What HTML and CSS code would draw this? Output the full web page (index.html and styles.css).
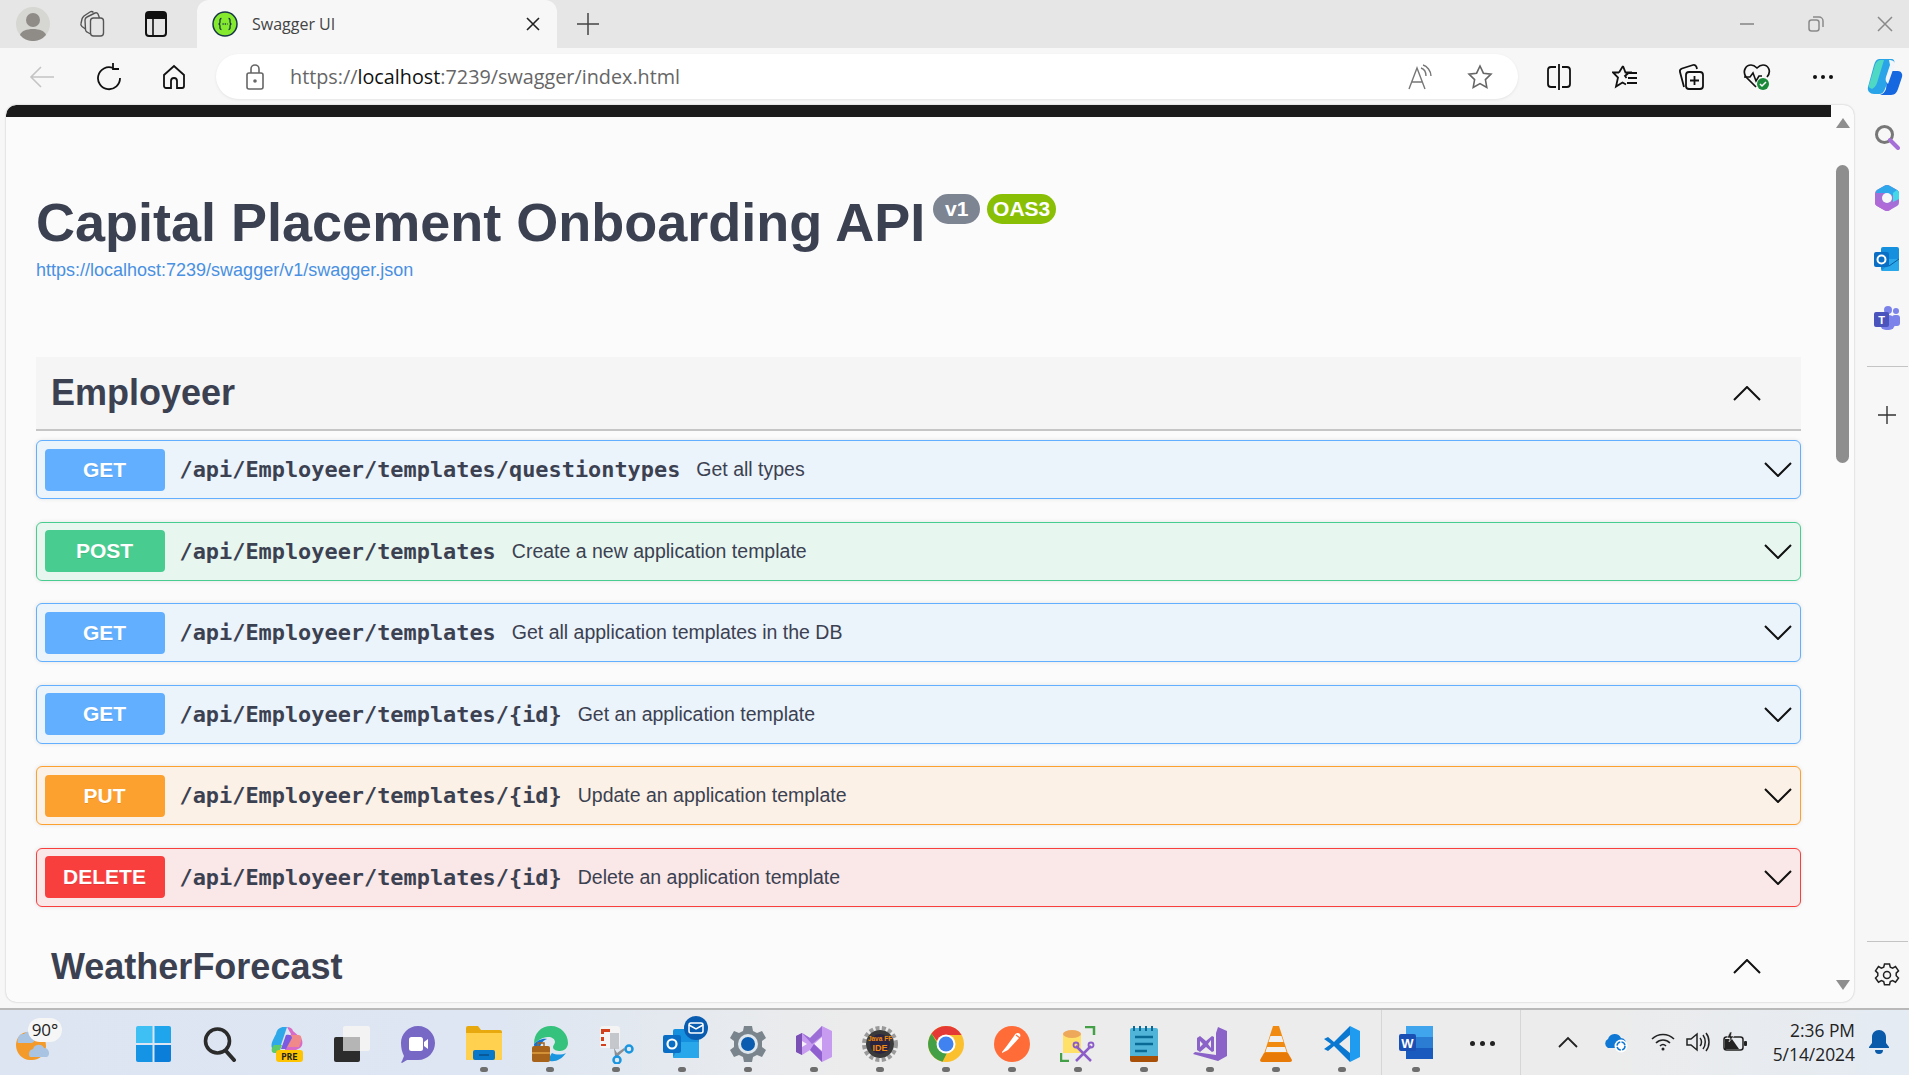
FILE: index.html
```html
<!DOCTYPE html>
<html lang="en">
<head>
  <meta charset="UTF-8">
  <title>Swagger UI</title>
  <link rel="stylesheet" href="styles.css">
</head>
<body>
<div class="window">

  <!-- title bar -->
  <div class="titlebar">
    <div class="slot s-profile">
      <svg width="34" height="34" viewBox="0 0 34 34"><circle cx="17" cy="17" r="17" fill="#d6d6d2"/><circle cx="17" cy="13" r="7" fill="#8f8b87"/><path d="M4 28c2-8 24-8 26 0a17 17 0 0 1-26 0z" fill="#8f8b87"/></svg>
    </div>
    <div class="slot s-coll">
      <svg width="26" height="28" viewBox="0 0 26 28" fill="none" stroke="#555" stroke-width="1.400"><rect x="11.500" y="8" width="13" height="18" rx="3"/><path d="M11.500 24 8 22c-1-.5-1.500-1.500-1.500-2.500L6 10c0-1.500.8-2.500 2-3l8-4c1.500-.5 2.500 0 3 1l1.500 4"/><path d="M6.500 19 3 16.500C2 15.500 1.500 14.500 2 13.500L3 9c.4-1.500 1-2 2-3l6-4c1.500-.8 2.500-.5 3.500.5"/></svg>
    </div>
    <div class="slot s-tabs">
      <svg width="22" height="26" viewBox="0 0 22 26"><rect x="1" y="1" width="20" height="24" rx="3" fill="none" stroke="#111" stroke-width="2"/><path d="M1 4a3 3 0 0 1 3-3h14a3 3 0 0 1 3 3v4H1z" fill="#111"/><path d="M8 8v16" stroke="#111" stroke-width="1.600"/></svg>
    </div>
    <div class="tab">
      <svg width="26" height="26" viewBox="0 0 26 26"><circle cx="13" cy="13" r="12" fill="#85ea2d" stroke="#173646" stroke-width="1.500"/><path d="M9.500 7.500c-2 0-1.500 2-1.500 3.500 0 1.500-1 2-1.500 2 .5 0 1.500.5 1.500 2s-.5 3.500 1.500 3.500M16.500 7.500c2 0 1.500 2 1.500 3.500 0 1.500 1 2 1.500 2-.5 0-1.500.5-1.500 2s.5 3.500-1.500 3.500" fill="none" stroke="#173646" stroke-width="1.300"/><path d="M10.500 13h5" stroke="#173646" stroke-width="1.500" stroke-dasharray="1.200 1"/></svg>
      <span class="tab-title">Swagger UI</span>
      <svg class="tab-close" width="14" height="14" viewBox="0 0 14 14"><path d="M1 1l12 12M13 1 1 13" stroke="#222" stroke-width="1.600"/></svg>
    </div>
    <div class="slot s-new">
      <svg width="22" height="22" viewBox="0 0 22 22"><path d="M11 0v22M0 11h22" stroke="#444" stroke-width="1.500"/></svg>
    </div>
    <div class="win-controls">
      <svg width="16" height="16" viewBox="0 0 16 16"><path d="M1 8h14" stroke="#8a8a8a" stroke-width="1.600"/></svg>
      <svg width="16" height="16" viewBox="0 0 16 16" fill="none" stroke="#8a8a8a" stroke-width="1.500"><rect x="1" y="4" width="10" height="11" rx="2.500"/><path d="M5 1h6a4 4 0 0 1 4 4v6"/></svg>
      <svg width="16" height="16" viewBox="0 0 16 16"><path d="M1 1l14 14M15 1 1 15" stroke="#8a8a8a" stroke-width="1.500"/></svg>
    </div>
  </div>

  <!-- address bar row -->
  <div class="toolbar">
    <div class="tool">
      <svg width="26" height="24" viewBox="0 0 26 24" fill="none" stroke="#c4c4c4" stroke-width="1.600"><path d="M25 12H2M12 2 2 12l10 10"/></svg>
    </div>
    <div class="tool">
      <svg width="26" height="28" viewBox="0 0 26 28" fill="none" stroke="#111" stroke-width="1.800"><path d="M18 5a11 11 0 1 0 7 10"/><path d="M18 0v6h6"/></svg>
    </div>
    <div class="tool">
      <svg width="24" height="26" viewBox="0 0 24 26" fill="none" stroke="#111" stroke-width="1.800"><path d="M9 24H4a2 2 0 0 1-2-2V11l10-9 10 9v11a2 2 0 0 1-2 2h-5v-7a3 3 0 0 0-6 0z"/></svg>
    </div>
    <div class="address">
      <svg width="18" height="26" viewBox="0 0 18 26" fill="none" stroke="#666" stroke-width="1.600"><rect x="1" y="9" width="16" height="16" rx="2"/><path d="M5 9V5a4 4 0 0 1 8 0v4"/><circle cx="9" cy="17" r="1" fill="#666"/></svg>
      <span class="url">https://<b>localhost</b>:7239/swagger/index.html</span>
      <svg class="read-aloud" width="26" height="26" viewBox="0 0 26 26" fill="none" stroke="#777" stroke-width="1.400"><path d="M1 25 9 4l8 21M4 18h10"/><path d="M15 3c3 1 5 4 5 8M17 0c4 1 8 6 8 11" transform="translate(-2 1)"/></svg>
      <svg class="fav" width="26" height="26" viewBox="0 0 26 26" fill="none" stroke="#666" stroke-width="1.600"><path d="m13 2 3.400 7.200 7.600 1-5.600 5.400 1.400 7.800-6.800-3.800-6.800 3.800 1.400-7.800L2 10.200l7.600-1z"/></svg>
    </div>
    <div class="tools-right">
      <div class="tool-r">
        <svg width="24" height="28" viewBox="0 0 24 28" fill="none" stroke="#111" stroke-width="1.800"><path d="M12 1v26"/><path d="M9 4H4a3 3 0 0 0-3 3v14a3 3 0 0 0 3 3h5M15 4h5a3 3 0 0 1 3 3v14a3 3 0 0 1-3 3h-5"/></svg>
      </div>
      <div class="tool-r">
        <svg width="26" height="28" viewBox="0 0 26 28" fill="none" stroke="#111" stroke-width="1.800"><path d="m11 3 2.500 6.500H20M17 9.500l-4 3.500 1.500 2M7 9.500 11 3M7 9.500H1l5 5-2 9 6.500-4 3.500 2"/><path d="M17 10h8M16 15h9M15 20h10"/></svg>
      </div>
      <div class="tool-r">
        <svg width="26" height="28" viewBox="0 0 26 28" fill="none" stroke="#111" stroke-width="1.800"><rect x="8" y="9" width="17" height="17" rx="3"/><path d="M16.500 13v9M12 17.500h9"/><path d="M6 24 2 9c-.5-2 .5-3 2-3.500L15 2c2-.5 3 .5 3.500 2l.5 2"/></svg>
      </div>
      <div class="tool-r">
        <svg width="28" height="28" viewBox="0 0 28 28"><path d="M13 24 3 14C-1 8 3 2 8 2c3 0 5 2 6 3 1-1 3-3 6-3 5 0 9 6 4 12" fill="none" stroke="#111" stroke-width="1.700"/><path d="M1 14h6l3-4 3 8 3-5h3" fill="none" stroke="#111" stroke-width="1.600"/><circle cx="20" cy="21" r="6" fill="#1a8a3a"/><path d="m17 21 2 2 4-4" fill="none" stroke="#fff" stroke-width="1.500"/></svg>
      </div>
      <div class="tool-r dots"><i></i><i></i><i></i></div>
      <div class="tool-r copilot">
        <svg width="36" height="38" viewBox="0 0 36 38"><path d="M12 1h12c3 0 4 2 3 5l-9 25c-1 3-3 5-6 5H7c-4 0-7-3-6-7L7 7c1-4 3-6 5-6z" fill="#2aa4e8"/><path d="M2 27 8 7c1-3 3-5 6-5h3L10 25c-1 3-3 5-5 6-2-1-4-2-3-4z" fill="#4fd8c4"/><path d="M21 13h10c3 0 5 3 4 6l-4 12c-1 3-3 6-7 6H13c3-1 5-3 6-6z" fill="#1668e0"/><path d="M22 2c3 0 6 1 6 4l-7 20c-2-2-3-4-2-7l4-12z" fill="#f2f6fa"/></svg>
      </div>
    </div>
  </div>

  <div class="middle">
    <div class="viewport">
      <div class="page">
        <div class="topbar"></div>

        <div class="info">
          <div class="title-row">
            <h2 class="title">Capital Placement Onboarding API</h2>
            <span class="badge badge-ver">v1</span>
            <span class="badge badge-oas">OAS3</span>
          </div>
          <a class="spec-link" href="#">https://localhost:7239/swagger/v1/swagger.json</a>
        </div>

        <div class="tag tag-open">
          <h3>Employeer</h3>
          <svg class="chev-tag" width="28" height="15" viewBox="0 0 28 15"><path d="M1 14 14 1l13 13" fill="none" stroke="#111" stroke-width="2"/></svg>
        </div>

        <div class="ops">
          <div class="op op-get">
            <span class="method">GET</span>
            <span class="path">/api/Employeer/templates/questiontypes</span>
            <span class="desc">Get all types</span>
            <svg class="chev" width="28" height="15" viewBox="0 0 28 15"><path d="m1 1 13 13L27 1" fill="none" stroke="#111" stroke-width="2"/></svg>
          </div>
          <div class="op op-post">
            <span class="method">POST</span>
            <span class="path">/api/Employeer/templates</span>
            <span class="desc">Create a new application template</span>
            <svg class="chev" width="28" height="15" viewBox="0 0 28 15"><path d="m1 1 13 13L27 1" fill="none" stroke="#111" stroke-width="2"/></svg>
          </div>
          <div class="op op-get">
            <span class="method">GET</span>
            <span class="path">/api/Employeer/templates</span>
            <span class="desc">Get all application templates in the DB</span>
            <svg class="chev" width="28" height="15" viewBox="0 0 28 15"><path d="m1 1 13 13L27 1" fill="none" stroke="#111" stroke-width="2"/></svg>
          </div>
          <div class="op op-get">
            <span class="method">GET</span>
            <span class="path">/api/Employeer/templates/{id}</span>
            <span class="desc">Get an application template</span>
            <svg class="chev" width="28" height="15" viewBox="0 0 28 15"><path d="m1 1 13 13L27 1" fill="none" stroke="#111" stroke-width="2"/></svg>
          </div>
          <div class="op op-put">
            <span class="method">PUT</span>
            <span class="path">/api/Employeer/templates/{id}</span>
            <span class="desc">Update an application template</span>
            <svg class="chev" width="28" height="15" viewBox="0 0 28 15"><path d="m1 1 13 13L27 1" fill="none" stroke="#111" stroke-width="2"/></svg>
          </div>
          <div class="op op-delete">
            <span class="method">DELETE</span>
            <span class="path">/api/Employeer/templates/{id}</span>
            <span class="desc">Delete an application template</span>
            <svg class="chev" width="28" height="15" viewBox="0 0 28 15"><path d="m1 1 13 13L27 1" fill="none" stroke="#111" stroke-width="2"/></svg>
          </div>
        </div>

        <div class="tag tag-next">
          <h3>WeatherForecast</h3>
          <svg class="chev-tag" width="28" height="15" viewBox="0 0 28 15"><path d="M1 14 14 1l13 13" fill="none" stroke="#111" stroke-width="2"/></svg>
        </div>
      </div>

      <div class="scrollbar">
        <span class="arrow arrow-up"></span>
        <span class="thumb"></span>
        <span class="arrow arrow-down"></span>
      </div>
    </div>

    <!-- edge sidebar -->
    <div class="sidebar">
      <svg width="26" height="26" viewBox="0 0 26 26"><circle cx="10.500" cy="10.500" r="8" fill="none" stroke="#777" stroke-width="3"/><path d="m16 16 8 8" stroke="#a56fd8" stroke-width="4" stroke-linecap="round"/></svg>
      <svg width="26" height="28" viewBox="0 0 26 28"><path d="M10 2c2-1.300 4-1.300 6 0l7 4c1.500 1 2 2 2 4v8c0 2-.5 3-2 4l-7 4c-2 1.300-4 1.300-6 0l-7-4c-1.500-1-2-2-2-4v-8c0-2 .5-3 2-4z" fill="#a56fd8"/><path d="M13 1c1 0 2 .4 3 1l7 4c1.500 1 2 2 2 4v5l-7-4-5-2H2c0-1 .5-2 1-3l7-4c1-.6 2-1 3-1z" fill="#2ea8ea"/><path d="M25 10v5l-6 3V9l4-3c1.500 1 2 2 2 4z" fill="#45d8ea"/><path d="M1 14l10 6 9 2-4 4c-2 1.300-4 1.300-6 0l-7-4c-1.500-1-2-2-2-4z" fill="#b06ad8"/><circle cx="13" cy="14" r="5" fill="#f7f7f7"/></svg>
      <svg width="26" height="26" viewBox="0 0 26 26"><rect x="7" y="1" width="18" height="24" rx="2" fill="#1490df"/><path d="M12 13h13v11a1 1 0 0 1-1 1H7l5-4z" fill="#28a8ea"/><path d="M25 13 15 20l-3-2" fill="none" stroke="#0a5a9e" stroke-width="1"/><rect x="0" y="6" width="15" height="15" rx="2" fill="#0a6fc4"/><circle cx="7.500" cy="13.500" r="4" fill="none" stroke="#fff" stroke-width="2"/></svg>
      <svg width="26" height="26" viewBox="0 0 26 26"><circle cx="22" cy="5" r="3" fill="#7b83eb"/><rect x="18" y="9" width="8" height="11" rx="3" fill="#7b83eb"/><circle cx="14" cy="4" r="4" fill="#7b83eb"/><rect x="6" y="9" width="15" height="15" rx="6" fill="#7b83eb"/><rect x="0" y="6" width="15" height="15" rx="2" fill="#4b53bc"/><text x="7.500" y="18" class="teams-t">T</text></svg>
      <div class="side-rule"></div>
      <svg class="side-plus" width="18" height="18" viewBox="0 0 18 18"><path d="M9 0v18M0 9h18" stroke="#333" stroke-width="1.400"/></svg>
      <div class="side-space"></div>
      <div class="side-rule side-rule-low"></div>
      <svg class="side-gear" width="26" height="26" viewBox="0 0 26 26" fill="none" stroke="#222" stroke-width="1.500"><path d="M10.500 2h5l.8 3.200 2.300 1 2.900-1.600 3 4.200-2.300 2.300v2.600l2.300 2.300-3 4.200-2.900-1.600-2.300 1-.8 3.200h-5l-.8-3.200-2.300-1-2.900 1.600-3-4.200 2.300-2.300v-2.600L1.500 8.800l3-4.200 2.900 1.600 2.300-1z"/><circle cx="13" cy="13" r="3.500"/></svg>
    </div>
  </div>

  <!-- windows taskbar -->
  <div class="taskbar">
    <div class="weather">
      <svg width="38" height="38" viewBox="0 0 38 38"><path d="M14 7h4a14 14 0 0 1 0 28h-2C8 35 2 28 2 20 2 13 7 7 14 7z" fill="#f39a2b"/><path d="M4 14a5 5 0 0 1 6-5 5 5 0 0 1 9 2 4 4 0 0 1-1 7H4a4 4 0 0 1 0-4z" fill="#a9c3e2"/><path d="M16 32a5 5 0 0 1 3-8 6 6 0 0 1 11-1 5 5 0 0 1 3 9z" fill="#a9c3e2"/></svg>
      <span class="temp">90°</span>
    </div>

    <div class="task t-start">
      <svg width="35" height="36" viewBox="0 0 35 36"><path d="M2 0h14.500v17H0V2a2 2 0 0 1 2-2z" fill="#3fc0f5"/><path d="M18.500 0H33a2 2 0 0 1 2 2v15H18.500z" fill="#1ea5ec"/><path d="M0 19h16.500v17H2a2 2 0 0 1-2-2z" fill="#1593e4"/><path d="M18.500 19H35v15a2 2 0 0 1-2 2H18.500z" fill="#0a7ed8"/></svg>
    </div>
    <div class="task">
      <svg width="34" height="36" viewBox="0 0 34 36" fill="none" stroke="#2b2b2b"><circle cx="14.500" cy="15" r="12" stroke-width="3.600"/><path d="m23 25 8 9" stroke-width="4" stroke-linecap="round"/></svg>
    </div>
    <div class="task">
      <svg width="36" height="36" viewBox="0 0 36 36"><path d="M8 8c1-5 4-7 8-7h3L12 22H4C2 18 6 12 8 8z" fill="#2ea8e8"/><path d="M4 22c-1 3 0 5 3 5h4l3-8H6z" fill="#5ecb6a"/><path d="M19 1c3 0 5 1 6 4l8 7c2 3 2 8-1 10l-8 4h-8L23 8z" fill="#d86ac8"/><path d="M18 9h12c3 0 4 2 3 6l-2 6H15z" fill="#f08a8a"/><path d="M18 9c3-1 6 0 6 3l-6 11h-5z" fill="#7a5ae0"/><rect x="8" y="24" width="27" height="12" rx="3" fill="#ffc400"/><text x="21.500" y="34" class="pre-t">PRE</text></svg>
    </div>
    <div class="task">
      <svg width="36" height="36" viewBox="0 0 36 36"><rect x="0" y="11" width="26" height="25" rx="2" fill="#2c2c2c"/><rect x="9" y="0" width="27" height="25" rx="2" fill="#f3f3f3"/><rect x="9" y="11" width="17" height="14" fill="#b5b5b5"/></svg>
    </div>
    <div class="task">
      <svg width="36" height="38" viewBox="0 0 36 38"><path d="M18 0c10 0 17 8 17 17s-7 17-17 17H7l-5 3c-1 0-1-1 0-2l2-5C2 26 1 22 1 17 1 8 8 0 18 0z" fill="#7668c4"/><rect x="9" y="11" width="14" height="14" rx="2.500" fill="#fff"/><path d="m24 16 4-3v10l-4-3z" fill="#fff"/></svg>
    </div>
    <div class="task has-dot">
      <svg width="36" height="34" viewBox="0 0 36 34"><path d="M0 2a2 2 0 0 1 2-2h10l3 4h19a2 2 0 0 1 2 2v26a2 2 0 0 1-2 2H2a2 2 0 0 1-2-2z" fill="#e8a90f"/><path d="M0 7h36v25a2 2 0 0 1-2 2H2a2 2 0 0 1-2-2z" fill="#ffd14f"/><rect x="7" y="24" width="22" height="10" rx="2" fill="#0a78c8"/><path d="M13 29h10" stroke="#0a4f8a" stroke-width="1.500"/></svg>
    </div>
    <div class="task has-dot">
      <svg width="36" height="36" viewBox="0 0 36 36"><path d="M2 18C2 7 9 0 19 0c10 0 17 8 17 17 0 5-4 8-8 8-3 0-7-1-7-4 0-2 2-3 2-5 0-3-3-5-7-5-6 0-11 4-14 7z" fill="#35c27c"/><path d="M2 18c3-3 8-6 13-5-5 2-7 6-7 10 0 6 5 11 11 12-9 1-17-7-17-17z" fill="#1173d4"/><path d="M18 35c6 1 12-2 16-8-4 2-10 2-14 0-2 2-3 5-2 8z" fill="#1a96e0"/><rect x="0" y="20" width="18" height="16" rx="2" fill="#a8631b"/><rect x="6" y="17" width="6" height="4" fill="none" stroke="#a8631b" stroke-width="1.500"/><path d="M0 27h18" stroke="#e0a040" stroke-width="1.500"/></svg>
    </div>
    <div class="task has-dot">
      <svg width="36" height="38" viewBox="0 0 36 38"><rect x="2" y="0" width="20" height="22" rx="3" fill="#f4f4f4"/><path d="M3 3h9v3H6v2H3zM3 11h3v4H3zM3 18h5v2H3z" fill="#d2401c"/><path d="M12 7h9v16H12z" fill="#c4c8cc"/><path d="m16 22 3 5 7-5 1 2-6 5-2 3-2-2z" fill="#8c9094"/><circle cx="31" cy="23" r="3.500" fill="none" stroke="#1a96e0" stroke-width="2.500"/><circle cx="19" cy="34" r="3.500" fill="none" stroke="#1a96e0" stroke-width="2.500"/></svg>
    </div>
    <div class="task has-dot has-badge">
      <svg width="38" height="34" viewBox="0 0 38 34"><rect x="10" y="3" width="26" height="29" rx="2" fill="#1490df"/><path d="M18 16h18v16H10z" fill="#28a8ea"/><rect x="0" y="9" width="18" height="18" rx="2" fill="#0a6fc4"/><circle cx="9" cy="18" r="4.500" fill="none" stroke="#fff" stroke-width="2.200"/></svg>
      <svg class="mail-badge" width="24" height="24" viewBox="0 0 24 24"><circle cx="12" cy="12" r="12" fill="#0a5cb0"/><rect x="5" y="7" width="14" height="10" rx="2" fill="none" stroke="#fff" stroke-width="1.500"/><path d="m5 9 7 4 7-4" fill="none" stroke="#fff" stroke-width="1.500"/></svg>
    </div>
    <div class="task has-dot">
      <svg width="36" height="36" viewBox="0 0 36 36"><path d="M14 0h8l1 5 4 2 5-2 4 7-4 3v6l4 3-4 7-5-2-4 2-1 5h-8l-1-5-4-2-5 2-4-7 4-3v-6L0 12l4-7 5 2 4-2z" fill="#7a848c"/><circle cx="18" cy="18" r="10" fill="#dfe7ee"/><circle cx="18" cy="18" r="7" fill="#0a5cb0"/></svg>
    </div>
    <div class="task has-dot">
      <svg width="36" height="36" viewBox="0 0 36 36"><path d="M26 0 36 5v26l-10 5-12-12-8 5-6-3V10l6-3 8 5z" fill="#c79cf0"/><path d="M26 0v10L16 18 6 7l8 5z" fill="#9b6fd6"/><path d="M0 10l6-3v22l-6-3z" fill="#7a50b4"/><path d="m6 15 5 3-5 3zM26 11v14l-8-7z" fill="#f5f0fa"/><path d="M14 24 26 36V26l-8-8z" fill="#8f5fd0"/></svg>
    </div>
    <div class="task has-dot">
      <svg width="36" height="36" viewBox="0 0 36 36"><circle cx="18" cy="18" r="16" fill="none" stroke="#9a9a9a" stroke-width="4" stroke-dasharray="4 2.400"/><circle cx="18" cy="18" r="14" fill="#3a3a3a"/><circle cx="18" cy="18" r="10" fill="#2b2440"/><text x="18" y="15" class="java-t">Java FF</text><text x="18" y="25" class="java-t java-b">IDE</text></svg>
    </div>
    <div class="task has-dot">
      <svg width="36" height="36" viewBox="0 0 36 36"><circle cx="18" cy="18" r="18" fill="#fbc02d"/><path d="M18 0a18 18 0 0 1 15.600 9H18a9 9 0 0 0-8.600 6.400L3.500 7.500A18 18 0 0 1 18 0z" fill="#e53935"/><path d="M3.500 7.500 11 20a9 9 0 0 0 8 7l-4.500 8.700A18 18 0 0 1 3.500 7.500z" fill="#43a047"/><circle cx="18" cy="18" r="9.500" fill="#fff"/><circle cx="18" cy="18" r="7.500" fill="#3f82f0"/></svg>
    </div>
    <div class="task has-dot">
      <svg width="36" height="36" viewBox="0 0 36 36"><circle cx="18" cy="18" r="18" fill="#ff6c37"/><path d="M8 27l6-3 12-13c1-2 0-4-2-4s-3 1-4 3l-8 11-4 5z" fill="#fff"/><path d="M22 9l4 3" stroke="#ff6c37" stroke-width="1.200"/></svg>
    </div>
    <div class="task has-dot">
      <svg width="36" height="36" viewBox="0 0 36 36"><path d="M3 8c0-3 18-3 18 0v19H3z" fill="#ffe169"/><ellipse cx="12" cy="8" rx="9" ry="4" fill="#eea85a"/><path d="M25 1h9v8M1 27v8h8" fill="none" stroke="#43a047" stroke-width="2.500"/><path d="m16 20 15 15M31 20 16 35" stroke="#8c5cc8" stroke-width="2.500"/><circle cx="16" cy="19" r="2.500" fill="none" stroke="#8c5cc8" stroke-width="1.800"/><circle cx="31" cy="19" r="2.500" fill="none" stroke="#8c5cc8" stroke-width="1.800"/></svg>
    </div>
    <div class="task has-dot">
      <svg width="28" height="36" viewBox="0 0 28 36"><rect x="0" y="2" width="28" height="30" rx="2" fill="#4fb4d8"/><path d="M0 30h28v4a2 2 0 0 1-2 2H2a2 2 0 0 1-2-2z" fill="#a85008"/><path d="M5 11h18M5 18h18M5 25h12" stroke="#0a6a96" stroke-width="2.500"/><path d="M4 0v5M10 0v5M16 0v5M22 0v5" stroke="#0a6a96" stroke-width="2"/></svg>
    </div>
    <div class="task has-dot">
      <svg width="36" height="36" viewBox="0 0 36 36"><path d="M26 1 35 5v25l-9 5L1 28l2-2 21 3V7z" fill="#8a62c8"/><path d="m5 12 3-2 6 5 6-5 2 1v14l-2 1-6-5-6 5-3-2zM8 15v6l3-3zM19 14l-3 4 3 4z" fill="#8a62c8" fill-rule="evenodd"/></svg>
    </div>
    <div class="task has-dot">
      <svg width="32" height="36" viewBox="0 0 32 36"><path d="M13 0h6l9 28H4z" fill="#f08a10"/><path d="M10.500 10h11l2 6h-15zM7 21h18l1.500 5h-21z" fill="#f0f0f0"/><path d="M4 27h24l4 7a2 2 0 0 1-2 2H2a2 2 0 0 1-2-2z" fill="#e87a08"/></svg>
    </div>
    <div class="task has-dot">
      <svg width="36" height="36" viewBox="0 0 36 36"><path d="M26 0 36 5v26l-10 5z" fill="#1f9cf0"/><path d="M26 0 10 16l-6-5-4 2 7 5-7 5 4 2 6-5 16 16v-9L15 18 26 9z" fill="#0a78d0"/></svg>
    </div>
    <div class="task t-word has-dot">
      <svg width="34" height="33" viewBox="0 0 34 33"><rect x="7" y="0" width="27" height="33" rx="2" fill="#2b7cd3"/><rect x="7" y="0" width="27" height="11" fill="#41a5ee"/><rect x="7" y="22" width="27" height="11" fill="#185abd"/><rect x="0" y="8" width="17" height="17" rx="2" fill="#1a4fb4"/><text x="8.500" y="21.500" class="word-t">W</text></svg>
    </div>
    <div class="task t-more"><i></i><i></i><i></i></div>

    <div class="tray">
      <svg width="20" height="12" viewBox="0 0 20 12"><path d="m1 11 9-9 9 9" fill="none" stroke="#222" stroke-width="1.800"/></svg>
      <svg class="tray-cloud" width="26" height="22" viewBox="0 0 26 22"><path d="M5 17a5 5 0 0 1 0-9 7 7 0 0 1 13-1 5 5 0 0 1 4 8l-2 2z" fill="#0f78d4"/><circle cx="18" cy="15" r="6.500" fill="#fff"/><circle cx="18" cy="15" r="4" fill="none" stroke="#0f78d4" stroke-width="1.500" stroke-dasharray="5 1.300"/></svg>
      <svg class="tray-wifi" width="24" height="18" viewBox="0 0 24 18" fill="none" stroke="#222" stroke-width="1.600"><path d="M1 6c6-6 16-6 22 0M5 10c4-4 10-4 14 0M9 13c2-2 4-2 6 0"/><circle cx="12" cy="16" r="1.500" fill="#222" stroke="none"/></svg>
      <svg class="tray-vol" width="24" height="20" viewBox="0 0 24 20" fill="none" stroke="#222" stroke-width="1.500"><path d="M1 7v6h4l6 5V2L5 7z"/><path d="M14 6c2 2 2 6 0 8M17 3c3 4 3 10 0 14M20 1c4 5 4 13 0 18"/></svg>
      <svg class="tray-bat" width="24" height="20" viewBox="0 0 24 20"><rect x="1" y="5" width="19" height="13" rx="2.500" fill="none" stroke="#222" stroke-width="1.500"/><path d="M2 17V7h7l7 10z" fill="#222"/><rect x="21" y="9" width="3" height="5" rx="1" fill="#222"/><path d="M7 0 4 6h3l-1 4 5-6H8l1-4z" fill="#222" stroke="#eee" stroke-width=".6"/></svg>
      <div class="clock"><span>2:36 PM</span><span>5/14/2024</span></div>
      <svg class="tray-bell" width="20" height="24" viewBox="0 0 20 24"><path d="M10 0c4 0 7 3 7 7v6l3 4v1H0v-1l3-4V7c0-4 3-7 7-7z" fill="#0a5cab"/><path d="M6 20h8a4 4 0 0 1-8 0z" fill="#0a5cab"/></svg>
    </div>
  </div>
</div>
</body>
</html>
```
FILE: styles.css
```css
*{box-sizing:border-box}
html,body{margin:0;height:100%;overflow:hidden}
body{font-family:"Liberation Sans",Arial,sans-serif;color:#3b4151;background:#f7f7f7}
svg{display:block;flex:none}
.window{width:1909px;height:1075px;display:flex;flex-direction:column}

/* title bar */
.titlebar{height:48px;background:#e6e6e6;display:flex;align-items:center;flex:none}
.slot{display:flex;align-items:center;justify-content:center;height:48px}
.s-profile{width:66px}
.s-coll{width:52px}
.s-tabs{width:76px}
.s-new{width:62px}
.tab{width:360px;height:48px;margin-left:3px;background:#f7f7f7;border-radius:12px 12px 0 0;display:flex;align-items:center;padding:0 17px 0 15px}
.tab-title{font:16px "Open Sans",sans-serif;color:#444;margin-left:14px}
.tab-close{margin-left:auto}
.win-controls{margin-left:auto;display:flex;gap:53px;padding-right:16px}

/* toolbar */
.toolbar{height:57px;flex:none;display:flex;align-items:flex-start;padding:6px 0 0 16px;gap:14px;background:#f7f7f7}
.tool{width:52px;height:45px;flex:none;display:flex;align-items:center;justify-content:center}
.address{width:1302px;height:45px;flex:none;margin-left:2px;background:#fff;border-radius:23px;display:flex;align-items:center;padding-left:30px;box-shadow:0 1px 3px rgba(0,0,0,.08)}
.url{font:19.800px "Open Sans",sans-serif;color:#666;margin-left:26px;white-space:nowrap}
.url b{font-weight:400;color:#111}
.read-aloud{margin-left:auto}
.fav{margin:0 25px 0 33px}
.tools-right{display:flex;margin-left:-6px}
.tool-r{width:66px;height:45px;flex:none;display:flex;align-items:center;justify-content:center}
.dots{gap:4px}
.dots i{width:4px;height:4px;border-radius:50%;background:#111}
.copilot{margin-left:-4px}

/* page area */
.middle{flex:1;display:flex;min-height:0}
.viewport{width:1848px;flex:none;margin:0 0 6px 6px;background:#fbfbfb;border-radius:10px 10px 12px 10px;box-shadow:0 0 2px rgba(0,0,0,.25);display:flex;overflow:hidden}
.page{flex:1;min-width:0;overflow:hidden}
.topbar{height:12px;background:#1b1b1b;border-radius:10px 0 0 0}
.info{padding:75px 0 0 30px}
.title-row{display:flex;align-items:flex-start}
.title{font-size:54px;line-height:61px;font-weight:700;margin:0}
.badge{height:30px;margin-top:2px;border-radius:15px;color:#fff;font-size:21px;font-weight:700;line-height:30px;text-align:center}
.badge-ver{width:47px;margin-left:8px;background:#7d8492}
.badge-oas{width:69px;margin-left:7px;background:#89bf04}
.spec-link{display:block;margin-top:7px;font-size:18px;color:#4990e2;text-decoration:none}

.tag{margin:0 30px;height:74px;display:flex;align-items:center;justify-content:space-between;padding:2px 40px 0 15px}
.tag h3{margin:0;font-size:36px;font-weight:700}
.tag-open{margin-top:76px;padding-top:0;background:#f5f5f5;border-bottom:2px solid #c6c6c6}
.tag-next{margin-top:22px}

.ops{margin:9px 30px 0;display:flex;flex-direction:column;gap:22.600px}
.op{height:59px;flex:none;border:1.500px solid;border-radius:6px;display:flex;align-items:center;padding-left:7.500px;box-shadow:0 0 4px rgba(0,0,0,.1)}
.method{width:120px;height:42px;border-radius:4px;color:#fff;font-size:21px;font-weight:700;line-height:42px;text-align:center;text-shadow:0 1px 0 rgba(0,0,0,.1)}
.path{margin-left:15px;font:700 21.900px "DejaVu Sans Mono",monospace;white-space:nowrap}
.desc{margin-left:16px;font-size:19.500px;white-space:nowrap}
.chev{margin-left:auto;margin-right:8px}
.op-get{background:#ebf3fb;border-color:#61affe}
.op-get .method{background:#61affe}
.op-post{background:#e8f6f0;border-color:#49cc90}
.op-post .method{background:#49cc90}
.op-put{background:#fbf1e6;border-color:#fca130}
.op-put .method{background:#fca130}
.op-delete{background:#fae7e7;border-color:#f93e3e}
.op-delete .method{background:#f93e3e}

/* scrollbar */
.scrollbar{width:23px;display:flex;flex-direction:column;align-items:center;padding-top:13px}
.thumb{width:13px;height:298px;margin-top:37px;border-radius:7px;background:#8e8e8e}
.arrow{width:0;height:0;border-left:7.500px solid transparent;border-right:7.500px solid transparent}
.arrow-up{border-bottom:10px solid #8e8e8e}
.arrow-down{border-top:10px solid #8e8e8e;margin-top:auto;margin-bottom:12px}

/* sidebar */
.sidebar{flex:1;display:flex;flex-direction:column;align-items:center;padding:19px 0 0 11px;gap:34px;min-width:0}
.side-rule{width:41px;height:1px;background:#c4c4c4}
.side-plus{margin-top:5px}
.side-space{flex:1}
.side-rule-low{margin-bottom:-14px}
.side-gear{margin-bottom:20px}
.teams-t{font:700 11px "Liberation Sans",sans-serif;fill:#fff;text-anchor:middle}

/* taskbar */
.taskbar{height:67px;flex:none;border-top:2px solid #b9b9b9;background:linear-gradient(90deg,#dce5f1 0,#dde6f2 500px,#ececec 850px,#ececec 1600px,#e4ebf3 100%);display:flex;align-items:flex-start;position:relative}
.weather{width:119px;height:65px;position:relative;padding:15px 0 0 14px}
.temp{position:absolute;left:28px;top:8px;width:34px;height:24px;border-radius:12px;background:#f6f6f6;font:17px "Open Sans",sans-serif;color:#222;line-height:24px;text-align:center}
.task{width:66px;height:65px;position:relative;display:flex;align-items:flex-start;justify-content:center;padding-top:16px}
.t-start{width:68px}
.t-word{margin-left:8px;width:66px}
.has-dot::after{content:"";position:absolute;left:29px;bottom:3px;width:8px;height:5px;border-radius:3px;background:#6e6e6e}
.mail-badge{position:absolute;left:35px;top:6px}
.t-more{gap:5px;padding-top:31px;width:66px}
.t-more i{width:5px;height:5px;border-radius:50%;background:#222}
.tray{margin-left:auto;display:flex;align-items:center;height:64px;padding-right:20px}
.taskbar::before,.taskbar::after{content:"";position:absolute;top:0;bottom:0;width:1px;background:#d6d6d6}
.taskbar::before{left:1381px}
.taskbar::after{left:1520px}
.tray-cloud{margin-left:25px}
.tray-wifi{margin-left:22px}
.tray-vol{margin-left:11px}
.tray-bat{margin-left:13px}
.clock{margin-left:24px;display:flex;flex-direction:column;align-items:flex-end;font:17.400px/24px "Open Sans",sans-serif;color:#222;width:84px}
.tray-bell{margin-left:14px}
.pre-t{font:700 9px "DejaVu Sans Mono",monospace;fill:#222;text-anchor:middle}
.java-t{font:700 6.500px "Liberation Sans",sans-serif;fill:#f08a10;text-anchor:middle}
.java-b{font-size:9px}
.word-t{font:700 13px "Liberation Sans",sans-serif;fill:#fff;text-anchor:middle}
```
